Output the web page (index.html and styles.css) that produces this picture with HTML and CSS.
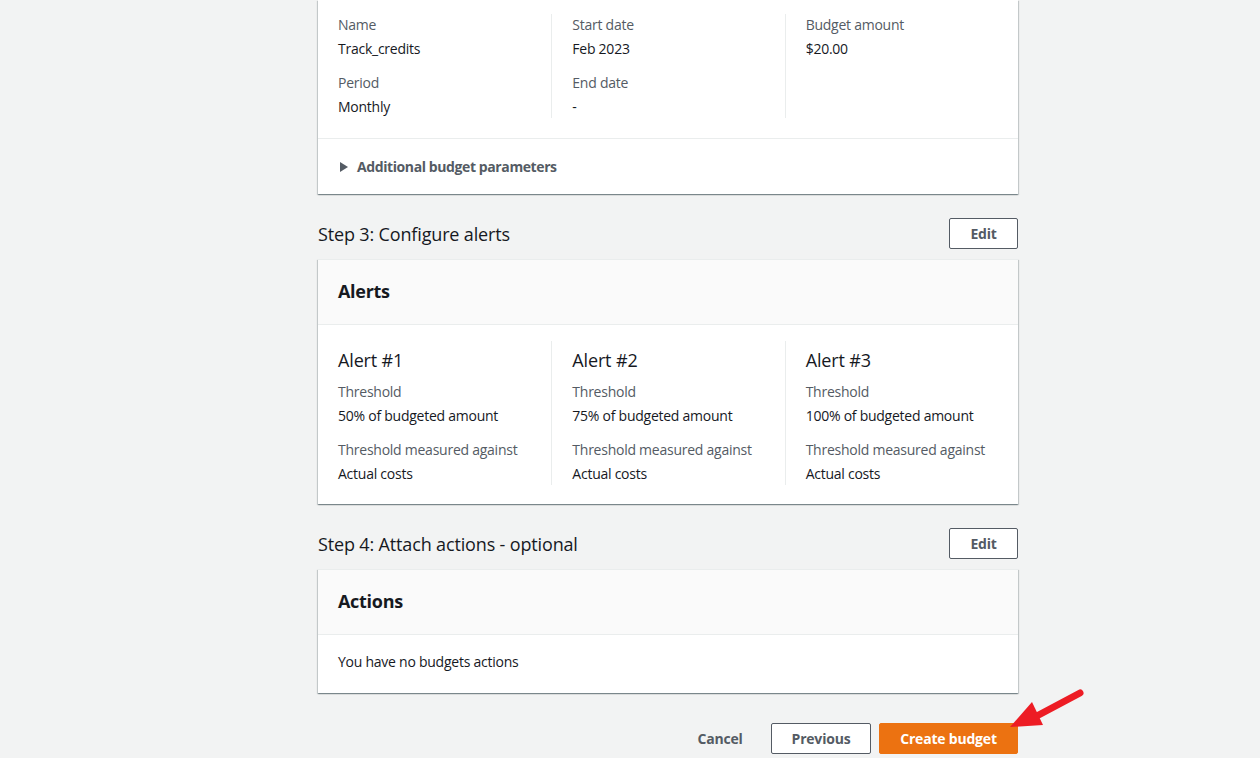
FILE: index.html
```html
<!DOCTYPE html>
<html lang="en">
<head>
<meta charset="utf-8">
<title>Review budget</title>
<link rel="stylesheet" href="styles.css">
</head>
<body>
<main class="main">
  <section class="card card-cut">
    <div class="cols cols-top">
      <div class="col">
        <div class="kv"><div class="label">Name</div><div class="value">Track_credits</div></div>
        <div class="kv"><div class="label">Period</div><div class="value">Monthly</div></div>
      </div>
      <div class="col">
        <div class="kv"><div class="label">Start date</div><div class="value">Feb 2023</div></div>
        <div class="kv"><div class="label">End date</div><div class="value">-</div></div>
      </div>
      <div class="col">
        <div class="kv"><div class="label">Budget amount</div><div class="value">$20.00</div></div>
      </div>
    </div>
    <div class="expander">
      <svg class="caret" width="10" height="12" viewBox="0 0 10 12"><polygon points="1,1 9,6 1,11" fill="#545b64"/></svg>
      <span>Additional budget parameters</span>
    </div>
  </section>

  <div class="step-head">
    <h2 class="step-title">Step 3: Configure alerts</h2>
    <button class="btn btn-normal btn-edit">Edit</button>
  </div>
  <section class="card">
    <header class="card-header"><h3>Alerts</h3></header>
    <div class="cols cols-alerts">
      <div class="col">
        <h4 class="alert-title">Alert #1</h4>
        <div class="kv"><div class="label">Threshold</div><div class="value">50% of budgeted amount</div></div>
        <div class="kv"><div class="label">Threshold measured against</div><div class="value">Actual costs</div></div>
      </div>
      <div class="col">
        <h4 class="alert-title">Alert #2</h4>
        <div class="kv"><div class="label">Threshold</div><div class="value">75% of budgeted amount</div></div>
        <div class="kv"><div class="label">Threshold measured against</div><div class="value">Actual costs</div></div>
      </div>
      <div class="col">
        <h4 class="alert-title">Alert #3</h4>
        <div class="kv"><div class="label">Threshold</div><div class="value">100% of budgeted amount</div></div>
        <div class="kv"><div class="label">Threshold measured against</div><div class="value">Actual costs</div></div>
      </div>
    </div>
  </section>

  <div class="step-head">
    <h2 class="step-title">Step 4: Attach actions - optional</h2>
    <button class="btn btn-normal btn-edit">Edit</button>
  </div>
  <section class="card">
    <header class="card-header"><h3>Actions</h3></header>
    <div class="card-body">You have no budgets actions</div>
  </section>

  <div class="footer">
    <button class="btn btn-link">Cancel</button>
    <button class="btn btn-normal btn-prev">Previous</button>
    <button class="btn btn-primary">Create budget</button>
    <svg class="arrow" width="90" height="50" viewBox="0 0 90 50">
      <line x1="80" y1="8" x2="33" y2="33" stroke="#ed1c24" stroke-width="7" stroke-linecap="round"/>
      <polygon points="10,42 32,17 43,40" fill="#ed1c24"/>
    </svg>
  </div>
</main>
</body>
</html>
```

FILE: styles.css
```css
* { box-sizing: border-box; }

html, body {
  margin: 0;
  padding: 0;
  background: #f2f3f3;
}

body {
  font-family: "Open Sans", "Noto Sans", Arial, sans-serif;
  font-size: 14px;
  line-height: 22px;
  letter-spacing: -0.25px;
  color: #16191f;
  height: 758px;
  overflow: hidden;
}

.main {
  width: 700px;
  margin-left: 318px;
}

.card {
  background: #fff;
  border-top: 1px solid #eaeded;
  box-shadow: 0 1px 1px 0 rgba(0, 28, 36, 0.3),
              1px 1px 1px 0 rgba(0, 28, 36, 0.15),
              -1px 1px 1px 0 rgba(0, 28, 36, 0.15);
}

.card-cut {
  border-top: none;
  padding-top: 14px;
}

.cols {
  display: grid;
  grid-template-columns: repeat(3, 1fr);
}

.col {
  padding: 0 20px;
}

.col + .col {
  border-left: 1px solid #eaeded;
}

.cols-top {
  padding-bottom: 20px;
}

.kv + .kv {
  margin-top: 12px;
}

.label {
  color: #545b64;
  margin-bottom: 2px;
}

.value {
  color: #16191f;
}

.expander {
  border-top: 1px solid #eaeded;
  padding: 17px 20px 16px;
  display: flex;
  align-items: center;
  gap: 8px;
  font-weight: 700;
  letter-spacing: -0.4px;
  color: #545b64;
}

.caret {
  display: block;
  margin-left: 1px;
}

.step-head {
  display: flex;
  align-items: center;
  justify-content: space-between;
  margin-top: 24px;
  margin-bottom: 10px;
}

.step-title {
  margin: 0;
  font-size: 18px;
  font-weight: 400;
  line-height: 24px;
  letter-spacing: -0.15px;
  color: #16191f;
}

.card-header {
  background: #fafafa;
  border-bottom: 1px solid #eaeded;
  padding: 18px 20px 20px;
}

.card-header h3 {
  margin: 0;
  font-size: 18px;
  line-height: 26px;
  font-weight: 700;
  letter-spacing: -0.3px;
  color: #16191f;
}

.cols-alerts {
  padding: 16px 0 19px;
}

.alert-title {
  margin: 0;
  padding: 7px 0 9px;
  font-size: 18px;
  line-height: 24px;
  font-weight: 400;
  letter-spacing: -0.15px;
  color: #16191f;
}

.card-body {
  padding: 16px 20px 20px;
}

.btn {
  font-family: inherit;
  font-size: 14px;
  font-weight: 700;
  line-height: 21px;
  padding: 4px 0;
  border-radius: 2px;
  border: 1px solid transparent;
  cursor: pointer;
  white-space: nowrap;
  text-align: center;
  letter-spacing: -0.2px;
}

.btn-normal {
  background: #fff;
  color: #545b64;
  border-color: #545b64;
}

.btn-edit {
  width: 69px;
}

.btn-link {
  background: transparent;
  color: #545b64;
  width: 86px;
}

.btn-prev {
  width: 100px;
}

.btn-primary {
  background: #ec7211;
  border-color: #ec7211;
  color: #fff;
  width: 139px;
}

.footer {
  position: relative;
  display: flex;
  justify-content: flex-end;
  gap: 8px;
  margin-top: 30px;
}

.arrow {
  position: absolute;
  left: 682px;
  top: -38px;
}
```
